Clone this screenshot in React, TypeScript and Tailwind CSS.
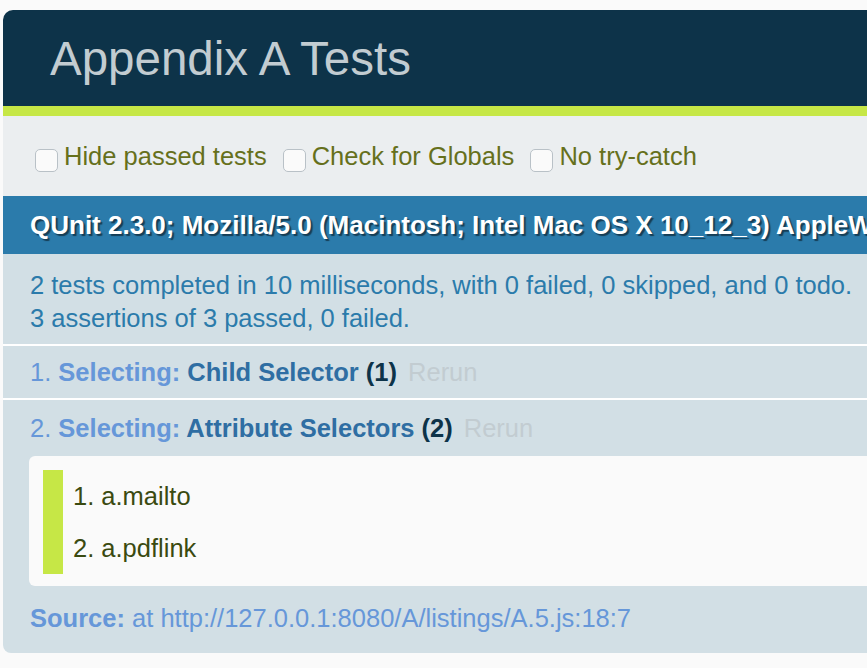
import React from "react";

function Box() {
  return (
    <span className="relative top-[4px] inline-block w-[23px] h-[23px] shrink-0 rounded-[5px] border border-[#b9c1c7] bg-[#fafafa]" />
  );
}

export default function App() {
  return (
    <div
      className="w-full min-h-[668px] overflow-hidden bg-[#fafafa] pl-[3px] pt-[10px]"
      style={{ fontFamily: '"Liberation Sans", Arial, sans-serif' }}
    >
      <div className="w-[1200px] rounded-tl-[10px] rounded-bl-[8px] overflow-hidden">
        <h1 className="h-[96px] flex items-center pl-[47px] pt-[2px] bg-[#0d3349] text-[#c2ccd1] text-[47.5px] leading-none font-normal">
          Appendix A Tests
        </h1>
        <div className="h-[10px] bg-[#c6e746]" />
        <div className="h-[80px] flex items-center pl-[32px] gap-[16px] bg-[#ebeef0] text-[#66701c] text-[25.5px]">
          <label className="flex items-center gap-[6px]">
            <Box />
            <span>Hide passed tests</span>
          </label>
          <label className="flex items-center gap-[6px]">
            <Box />
            <span>Check for Globals</span>
          </label>
          <label className="flex items-center gap-[6px]">
            <Box />
            <span>No try-catch</span>
          </label>
        </div>
        <div
          className="h-[58px] flex items-center pl-[27px] bg-[#2b7bab] text-white font-bold text-[26px] whitespace-nowrap overflow-hidden"
          style={{ textShadow: "2px 2px 1px rgba(0,0,0,0.5)" }}
        >
          QUnit 2.3.0; Mozilla/5.0 (Macintosh; Intel Mac OS X 10_12_3) AppleWebKit/603.1.30
        </div>
        <div className="pl-[27px] pt-[15px] pb-[9px] bg-[#d2dfe5] text-[#2b7bab] text-[25.5px] leading-[33px] border-b-2 border-white">
          <div>2 tests completed in 10 milliseconds, with 0 failed, 0 skipped, and 0 todo.</div>
          <div>3 assertions of 3 passed, 0 failed.</div>
        </div>
        <ol className="bg-[#d2dfe5] text-[25.5px] leading-[33px]">
          <li className="pl-[27px] pt-[10px] pb-[9px] border-b-2 border-white text-[#6697d9]">
            <span>1. </span>
            <strong className="font-bold">
              <span>Selecting: </span>
              <span className="text-[#2f6ea3]">Child Selector</span>{" "}
              <b className="text-[#0d3349]">(1)</b>
            </strong>
            <span className="ml-[11px] text-[#c2ccd1]">Rerun</span>
          </li>
          <li className="pl-[26px] pt-[12px] pb-[18px] text-[#6697d9]">
            <div className="pl-[1px]">
              <span>2. </span>
              <strong className="font-bold">
                <span>Selecting: </span>
                <span className="text-[#2f6ea3]">Attribute Selectors</span>{" "}
                <b className="text-[#0d3349]">(2)</b>
              </strong>
              <span className="ml-[11px] text-[#c2ccd1]">Rerun</span>
            </div>
            <ol className="mt-[11px] pl-[14px] pt-[14px] pb-[12px] bg-[#fafafa] rounded-l-[6px] text-[#3a4a10]">
              <li className="h-[52px] flex items-center pl-[10px] border-l-[20px] border-[#c6e746]">1. a.mailto</li>
              <li className="h-[52px] flex items-center pl-[10px] border-l-[20px] border-[#c6e746]">2. a.pdflink</li>
            </ol>
            <p className="mt-[16px] pl-[1px]">
              <b className="font-bold">Source:</b> at http://127.0.0.1:8080/A/listings/A.5.js:18:7
            </p>
          </li>
        </ol>
      </div>
    </div>
  );
}
